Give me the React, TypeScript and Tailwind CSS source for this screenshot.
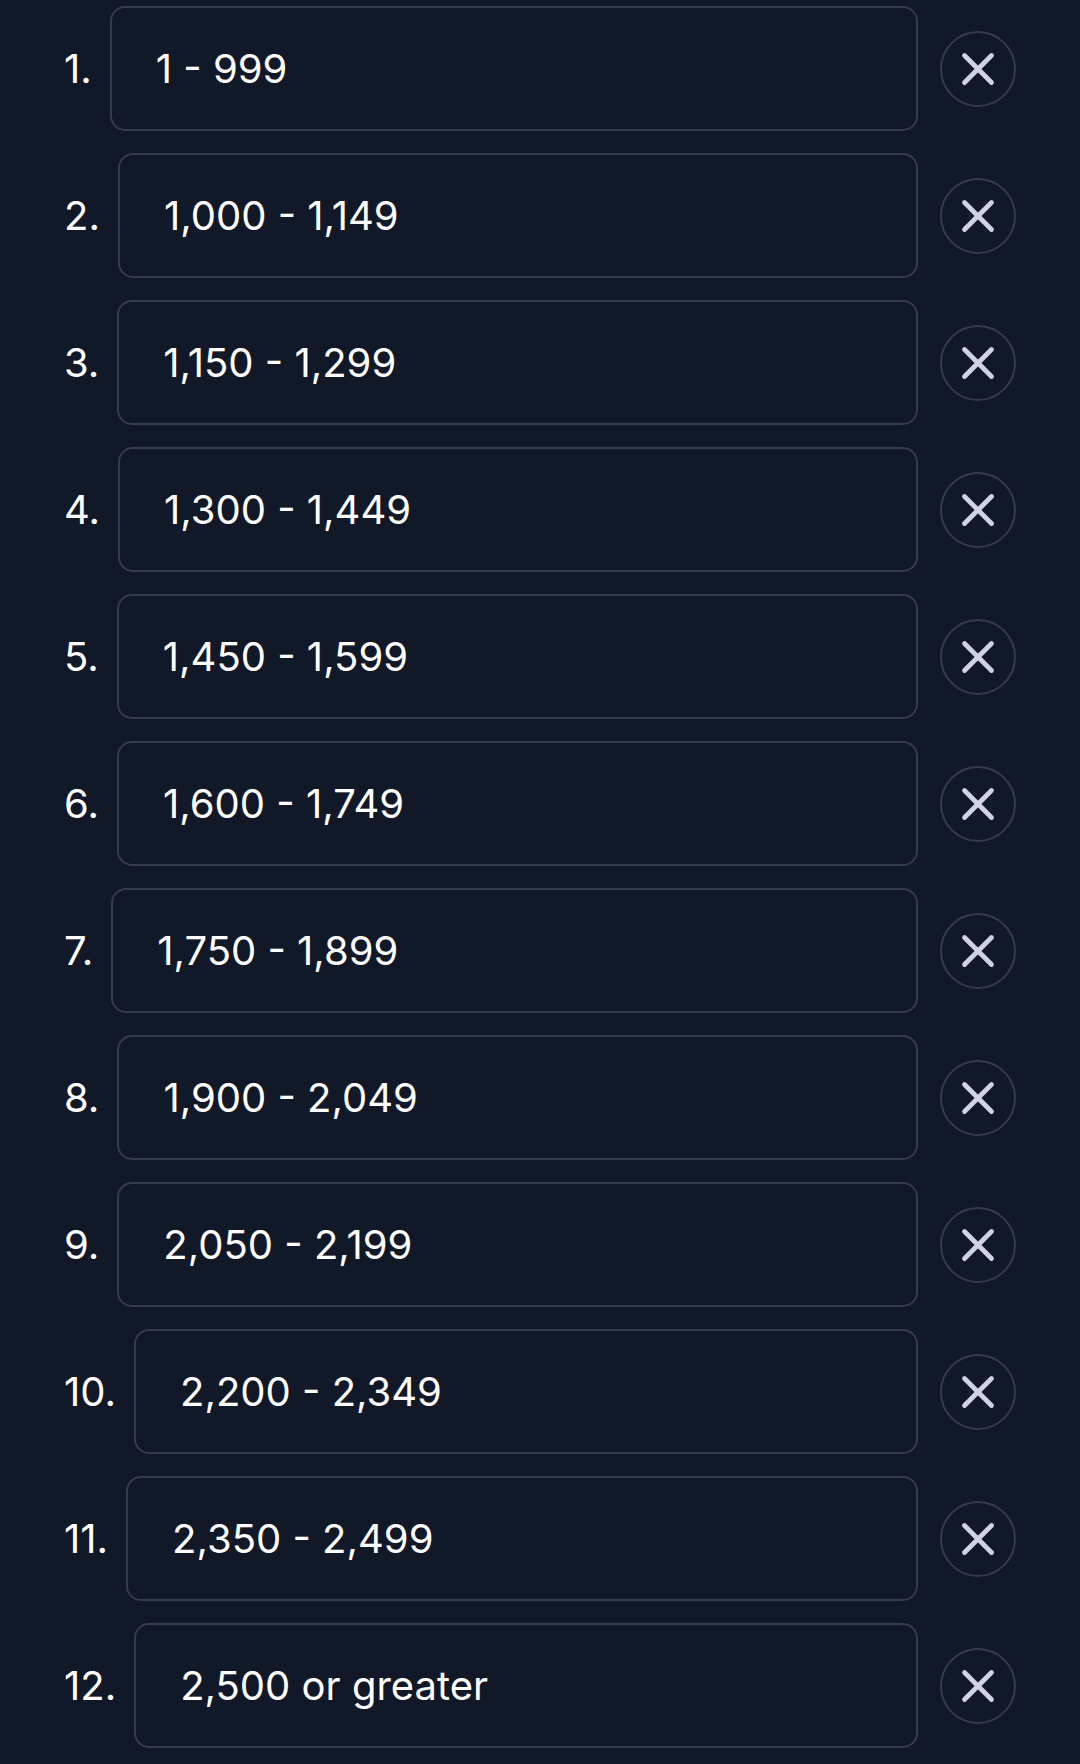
import { X } from 'lucide-react';

const ranges = [
  '1 - 999',
  '1,000 - 1,149',
  '1,150 - 1,299',
  '1,300 - 1,449',
  '1,450 - 1,599',
  '1,600 - 1,749',
  '1,750 - 1,899',
  '1,900 - 2,049',
  '2,050 - 2,199',
  '2,200 - 2,349',
  '2,350 - 2,499',
  '2,500 or greater',
];

const RangeRow = ({ index, label }: { index: number; label: string }) => {
  return (
    <div className="flex items-center">
      <span className="mr-[18px] text-[40px] leading-none text-white">{index}.</span>
      <div className="flex h-[125px] flex-1 items-center rounded-[15px] border-2 border-[#353b50] pl-[44px]">
        <span className="text-[40px] leading-none text-white">{label}</span>
      </div>
      <button className="ml-[22px] flex h-[76px] w-[76px] items-center justify-center rounded-full border-2 border-[#353b50]">
        <X className="h-[54px] w-[54px] text-[#d2d2e6]" strokeWidth={2.1} />
      </button>
    </div>
  );
};

export default function App() {
  return (
    <div
      className="min-h-[1764px] bg-[#111827] px-16 pt-[6px]"
      style={{ fontFamily: 'Inter, Roboto, sans-serif' }}
    >
      <div className="flex flex-col gap-[22px]">
        {ranges.map((r, i) => (
          <RangeRow key={i} index={i + 1} label={r} />
        ))}
      </div>
    </div>
  );
}
